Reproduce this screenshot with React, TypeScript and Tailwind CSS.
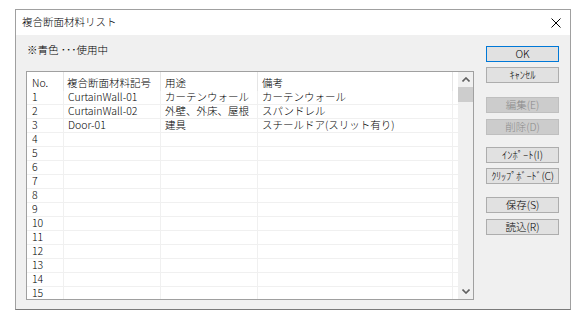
import React from "react";

const FONT = "font-['Noto_Sans_CJK_JP',sans-serif] font-light";

const rows: [string, string, string, string][] = [
  ["1", "CurtainWall-01", "カーテンウォール", "カーテンウォール"],
  ["2", "CurtainWall-02", "外壁、外床、屋根", "スパンドレル"],
  ["3", "Door-01", "建具", "スチールドア(スリット有り)"],
];

function DlgButton({
  label,
  className = "",
  primary = false,
  disabled = false,
}: {
  label: string;
  className?: string;
  primary?: boolean;
  disabled?: boolean;
}) {
  const tone = disabled
    ? "bg-[#cccccc] border-[#bfbfbf] text-[#8a8a8a]"
    : primary
      ? "bg-[#e1e1e1] border-[#0078d7] text-black"
      : "bg-[#e1e1e1] border-[#adadad] text-black";
  return (
    <div
      className={`h-[16px] w-[73px] border flex items-center justify-center text-[10.5px] leading-none whitespace-nowrap ${tone} ${className}`}
    >
      {label}
    </div>
  );
}

export default function App() {
  const allRows = Array.from({ length: 15 }, (_, i) => rows[i] ?? [String(i + 1), "", "", ""]);

  return (
    <div className={`min-h-screen bg-white pl-[15px] pt-[9px] ${FONT}`}>
      <div className="w-[556px] h-[301px] border border-[#a0a0a0] border-b-[#7a7a7a] flex flex-col">
        {/* Title bar */}
        <div className="h-[25px] bg-white flex items-center pl-[6px] pr-[9px] shrink-0">
          <span className="text-[10.5px] text-black leading-none">複合断面材料リスト</span>
          <svg className="ml-auto" width="10" height="10" viewBox="0 0 10 10">
            <path d="M0.5 0.5 L9.5 9.5 M9.5 0.5 L0.5 9.5" stroke="#000" strokeWidth="1" />
          </svg>
        </div>

        {/* Body */}
        <div className="flex-1 bg-[#f0f0f0] flex pl-[10px]">
          <div className="flex flex-col w-[448px]">
            <div className="h-[36px] pt-[9px] pl-[1px] text-[10.5px] leading-[12px] text-black">
              ※青色 ･･･使用中
            </div>

            {/* List */}
            <div className="h-[229px] border border-[#a0a0a0] bg-white flex overflow-hidden">
              <div className="flex-1 flex flex-col text-[10.5px] text-black overflow-hidden">
                <div className="h-[19px] shrink-0 grid grid-cols-[37px_97px_97px_195px_1fr] items-center">
                  <div className="h-full border-r border-[#e5e5e5] pl-[5px] pt-[5px] leading-[12px]">No.</div>
                  <div className="h-full border-r border-[#e5e5e5] pl-[3px] pt-[5px] leading-[12px]">複合断面材料記号</div>
                  <div className="h-full border-r border-[#e5e5e5] pl-[4px] pt-[5px] leading-[12px]">用途</div>
                  <div className="h-full border-r border-[#e5e5e5] pl-[4px] pt-[5px] leading-[12px]">備考</div>
                  <div />
                </div>
                {allRows.map((r) => (
                  <div
                    key={r[0]}
                    className="h-[14px] shrink-0 grid grid-cols-[37px_97px_97px_195px_1fr] border-b border-[#f0f0f0] leading-[12px]"
                  >
                    <div className="border-r border-[#f0f0f0] pl-[5px]">{r[0]}</div>
                    <div className="border-r border-[#f0f0f0] pl-[4px]">{r[1]}</div>
                    <div className="border-r border-[#f0f0f0] pl-[4px]">{r[2]}</div>
                    <div className="border-r border-[#f0f0f0] pl-[4px] whitespace-nowrap">{r[3]}</div>
                    <div />
                  </div>
                ))}
              </div>

              {/* Scrollbar */}
              <div className="w-[15px] shrink-0 bg-[#f0f0f0] flex flex-col">
                <div className="h-[15px] flex items-center justify-center">
                  <svg width="8" height="5" viewBox="0 0 8 5">
                    <path d="M0.5 4.5 L4 1 L7.5 4.5" stroke="#606060" strokeWidth="1.6" fill="none" />
                  </svg>
                </div>
                <div className="h-[15px] bg-[#cdcdcd]" />
                <div className="flex-1" />
                <div className="h-[15px] flex items-center justify-center">
                  <svg width="8" height="5" viewBox="0 0 8 5">
                    <path d="M0.5 0.5 L4 4 L7.5 0.5" stroke="#606060" strokeWidth="1.6" fill="none" />
                  </svg>
                </div>
              </div>
            </div>
          </div>

          {/* Buttons */}
          <div className="ml-[12px] pt-[11px] flex flex-col">
            <DlgButton label="OK" primary />
            <DlgButton label="ｷｬﾝｾﾙ" className="mt-[5px]" />
            <DlgButton label="編集(E)" disabled className="mt-[14px]" />
            <DlgButton label="削除(D)" disabled className="mt-[6px]" />
            <DlgButton label="ｲﾝﾎﾟｰﾄ(I)" className="mt-[12px]" />
            <DlgButton label="ｸﾘｯﾌﾟﾎﾞｰﾄﾞ(C)" className="mt-[5px] tracking-[-0.3px]" />
            <DlgButton label="保存(S)" className="mt-[13px]" />
            <DlgButton label="読込(R)" className="mt-[6px]" />
          </div>
        </div>
      </div>
    </div>
  );
}
